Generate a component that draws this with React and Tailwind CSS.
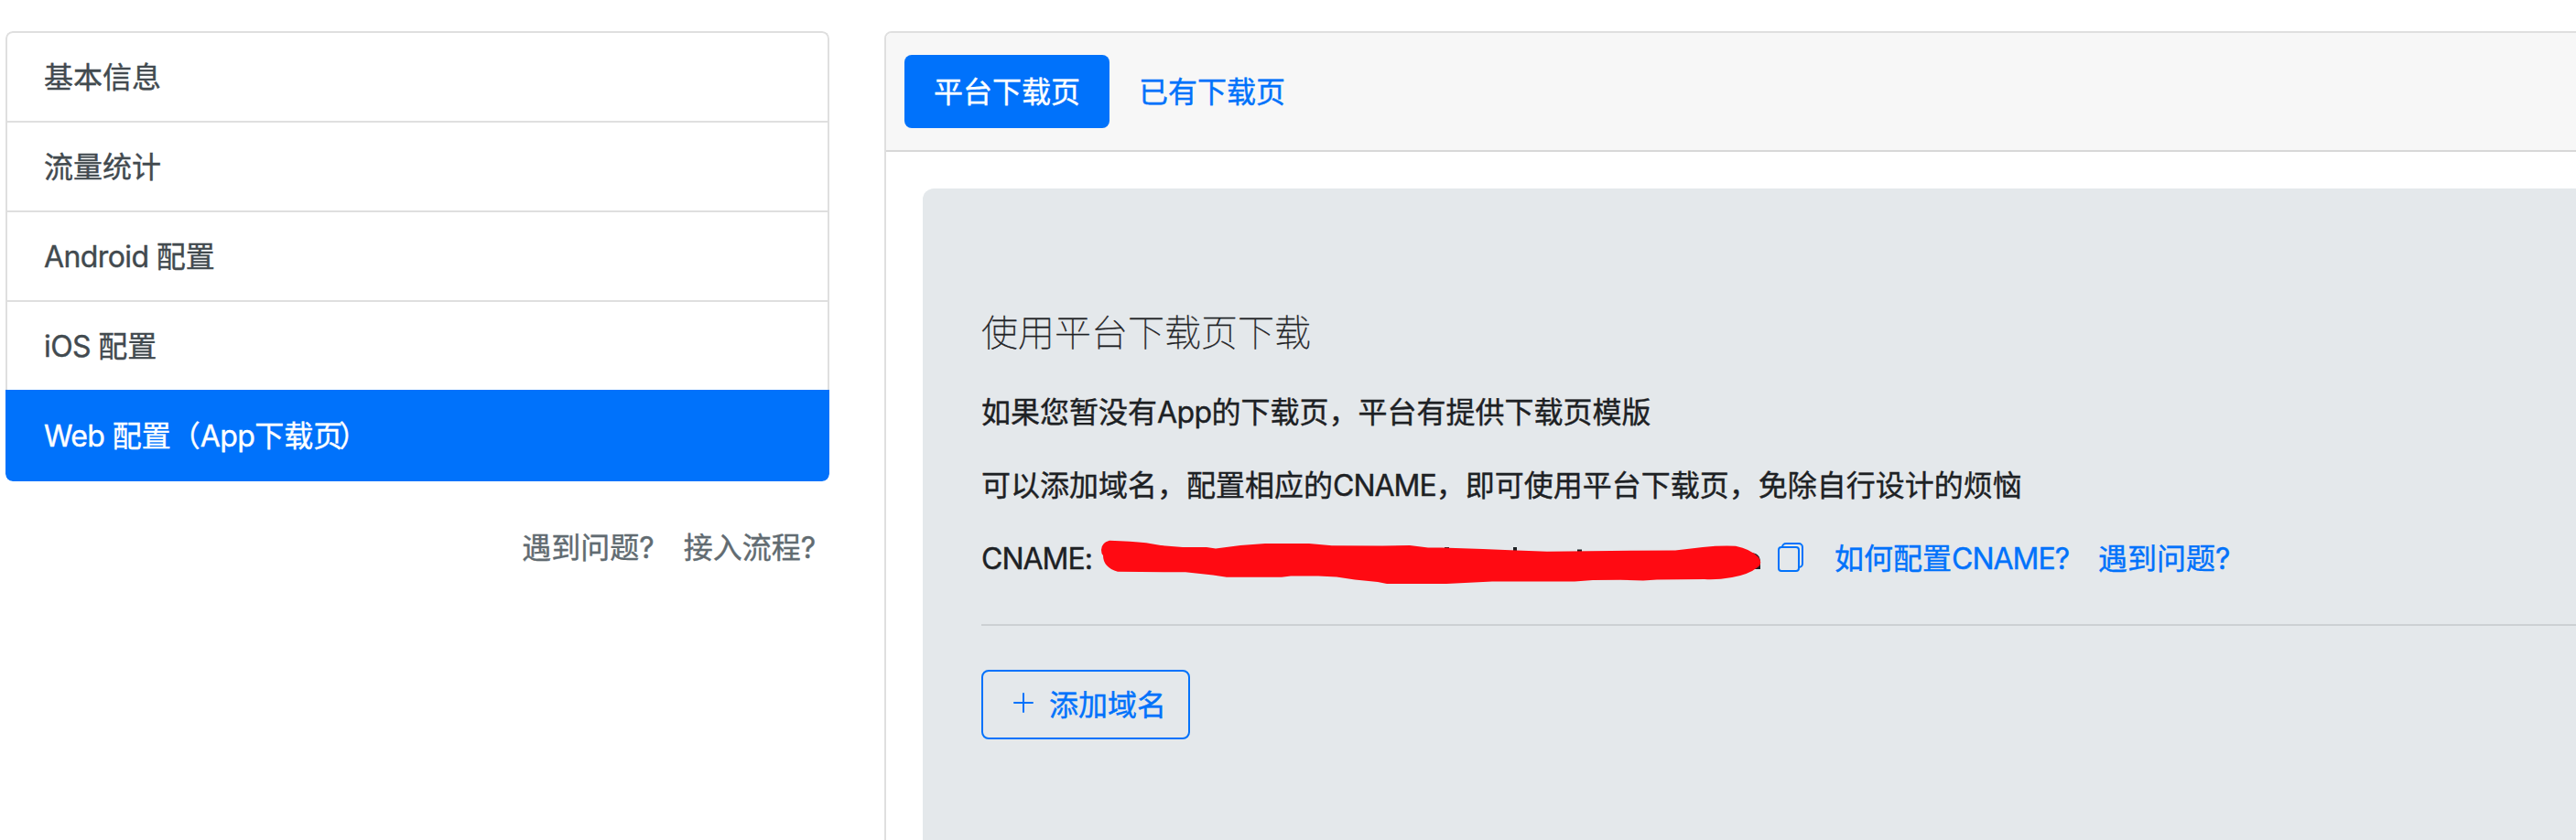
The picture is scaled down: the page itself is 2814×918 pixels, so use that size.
import { useState } from 'react';

const menu = [
  { key: 'base', label: '基本信息' },
  { key: 'traffic', label: '流量统计' },
  { key: 'android', latin: 'Android ', label: '配置' },
  { key: 'ios', latin: 'iOS ', label: '配置' },
  { key: 'web', latin: 'Web ', label: '配置（', latinTail: 'App', tail: '下载页', close: '）' }
];

const tabs = ['平台下载页', '已有下载页'];

function Latin({ children }) {
  return <span className="tracking-[-0.6px]">{children}</span>;
}

function Cname() {
  return <span className="tracking-[-1px]">CNAME</span>;
}

function Sidebar() {
  const [active, setActive] = useState('web');

  return (
    <div className="w-[900px] shrink-0">
      <div className="flex flex-col overflow-hidden rounded-lg">
        {menu.map((item, i) => (
          <button
            key={item.key}
            onClick={() => setActive(item.key)}
            className={`whitespace-pre border-x-2 border-t-2 px-10 pt-[25px] pb-[23px] text-left ${
              item.key === active
                ? 'border-[#0072fb] bg-[#0072fb] text-white'
                : 'border-[#dfdfdf] bg-white text-[#424a4f]'
            } ${i === 0 ? 'rounded-t-lg' : ''} ${i === menu.length - 1 ? 'rounded-b-lg border-b-2' : ''}`}
          >
            <Latin>{item.latin}</Latin>
            {item.label}
            <Latin>{item.latinTail}</Latin>
            {item.tail}
            <span className="-ml-1">{item.close}</span>
          </button>
        ))}
      </div>
      <div className="mt-[49px] flex justify-end gap-8 pr-[15px] text-[#616b71]">
        <a href="#">遇到问题?</a>
        <a href="#">接入流程?</a>
      </div>
    </div>
  );
}

function PlusIcon() {
  return (
    <svg className="h-10 w-10 shrink-0" viewBox="0 0 40 40" fill="none" stroke="currentColor" strokeWidth="2" strokeLinecap="round">
      <path d="M20 8v20M10 18h20" />
    </svg>
  );
}

function CopyIcon() {
  return (
    <svg className="h-8 w-8 shrink-0" viewBox="0 0 32 32" fill="none" stroke="currentColor" strokeWidth="2">
      <rect x="3" y="5" width="22" height="26" rx="3" />
      <path d="M7 5a4 4 0 0 1 4-4h14a4 4 0 0 1 4 4v18a4 4 0 0 1-4 4" />
    </svg>
  );
}

function Redacted() {
  return (
    <svg className="-mt-px h-14 w-[726px] shrink-0" viewBox="0 0 726 56">
      <g fill="#1d2124">
        <rect x="378" y="12" width="5" height="6" />
        <rect x="453" y="12" width="4" height="6" />
        <rect x="523" y="14.500" width="5" height="6" />
        <path d="M712 18q11 0 11 11v7h-8z" />
      </g>
      <path
        fill="#ff0a12"
        d="M3 15Q3 7 12 4.700Q36 5.500 52 7.300L68 10L92 12L118 12L128 13.500L155 10L182 8L230 8L255 10.300L310 10.600L340 10L360 12.500L375 12.500L420 14L450 15.300L490 16.700L560 16L630 15.500L660 12Q680 10 696 10.800Q712 14 721 23Q726 30 720 34Q710 42 692 45Q675 48 662 47L610 47.500L595 48.600L570 47.800L540 48L520 49.500L430 49.500L380 52L315 52L305 50L280 47.500L260 44.500L240 43.500L210 43.500L200 44.700L140 44.700L125 42.500L95 39.300L21 38.800Q5 34 5 21Q3 19 3 15Z"
      />
    </svg>
  );
}

function DownloadPanel() {
  return (
    <div className="h-[760px] rounded-[12px] bg-[#e4e8eb] px-16 py-32 text-[#1d2124]">
      <p className="mb-[33px] text-[40px] leading-[60px] font-thin">使用平台下载页下载</p>
      <p className="mb-8">
        如果您暂没有<Latin>App</Latin>的下载页，平台有提供下载页模版
      </p>
      <p className="mb-8">
        可以添加域名，配置相应的<Cname />，即可使用平台下载页，免除自行设计的烦恼
      </p>
      <div className="flex h-[47px] items-start">
        <span className="w-32 shrink-0"><Cname />:</span>
        <Redacted />
        <a href="#" className="ml-[14px] pt-[6px] text-[#0072fb]">
          <CopyIcon />
        </a>
        <a href="#" className="ml-8 text-[#0072fb]">
          如何配置<Cname />?
        </a>
        <a href="#" className="ml-[31px] text-[#0072fb]">遇到问题?</a>
      </div>
      <hr className="my-12 border-t-2 border-[#ccd0d3]" />
      <button className="flex h-[76px] items-center gap-2 rounded-lg border-2 border-[#0072fb] px-6 text-[#0072fb]">
        <PlusIcon />
        <span className="pt-0.5">添加域名</span>
      </button>
    </div>
  );
}

export default function App() {
  const [tab, setTab] = useState(0);

  return (
    <div
      lang="zh-CN"
      className="flex h-[918px] items-start gap-[60px] overflow-hidden bg-white pt-[34px] pl-1.5 font-[Inter,'Noto_Sans_CJK_SC',sans-serif] text-[32px] leading-[48px] [-webkit-text-stroke:0.4px]"
    >
      <Sidebar />
      <div className="w-[2040px] shrink-0 rounded-tl-lg border-2 border-[#dfdfdf]">
        <div className="flex rounded-tl-md border-b-2 border-[#d8d8d8] bg-[#f7f7f7] px-5 py-6">
          {tabs.map((label, i) => (
            <button
              key={label}
              onClick={() => setTab(i)}
              className={`rounded-lg px-8 pt-[17px] pb-[15px] ${i === tab ? 'bg-[#0072fb] text-white' : 'text-[#0072fb]'}`}
            >
              {label}
            </button>
          ))}
        </div>
        <div className="p-10">
          <DownloadPanel />
        </div>
      </div>
    </div>
  );
}
